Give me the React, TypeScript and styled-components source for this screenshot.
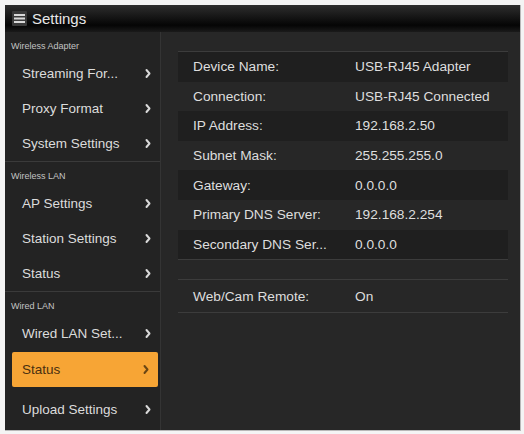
import React from "react";
import styled, { createGlobalStyle } from "styled-components";

const Global = createGlobalStyle`
  html, body { margin: 0; padding: 0; background: #ffffff; }
  body { font-family: "Liberation Sans", Arial, sans-serif; }
`;

const Frame = styled.div`
  width: 524px;
  height: 434px;
  box-sizing: border-box;
  padding: 5px 4px 4px 5px;
  background: #f4f4f4;
`;

const Window = styled.div`
  width: 515px;
  height: 425px;
  display: flex;
  flex-direction: column;
  background: #272727;
  border-right: 1px solid #b8b8b8;
  border-bottom: 1px solid #b8b8b8;
  overflow: hidden;
`;

const TitleBar = styled.div`
  height: 27px;
  flex: none;
  display: flex;
  align-items: center;
  gap: 5px;
  padding-left: 7px;
  background: linear-gradient(#2e2e2e 0%, #151515 45%, #050505 75%, #1a1a1a 100%);
  color: #e8e8e8;
  font-size: 15px;
`;

const Body = styled.div`
  flex: 1;
  display: flex;
  min-height: 0;
`;

const Sidebar = styled.nav`
  width: 155px;
  flex: none;
  background: #232323;
  border-right: 1px solid #343434;
  display: flex;
  flex-direction: column;
`;

const Group = styled.div<{ $last?: boolean }>`
  display: flex;
  flex-direction: column;
  border-bottom: ${(p) => (p.$last ? "none" : "1px solid #3a3a3a")};
`;

const GroupTitle = styled.div`
  height: 24px;
  box-sizing: border-box;
  display: flex;
  align-items: center;
  padding: 3px 0 0 6px;
  font-size: 9px;
  color: #c4c4c4;
`;

const Item = styled.div<{ $active?: boolean }>`
  height: 35px;
  display: flex;
  align-items: center;
  justify-content: space-between;
  margin: ${(p) => (p.$active ? "1px 2px 5px 7px" : "0")};
  padding: ${(p) => (p.$active ? "0 8px 0 10px" : "0 8px 0 17px")};
  background: ${(p) => (p.$active ? "#f7a535" : "transparent")};
  color: ${(p) => (p.$active ? "#4a3010" : "#dcdcdc")};
  border-radius: ${(p) => (p.$active ? "2px" : "0")};
  font-size: 13.5px;
`;

const Chevron = styled.svg<{ $active?: boolean }>`
  width: 8px;
  height: 11px;
  flex: none;
  stroke: ${(p) => (p.$active ? "#6a4614" : "#d8d8d8")};
`;

const Main = styled.section`
  flex: 1;
  padding: 19px 12px 0 17px;
  display: flex;
  flex-direction: column;
`;

const Table = styled.div`
  display: flex;
  flex-direction: column;
  border-top: 1px solid #3c3c3c;
  border-bottom: 1px solid #3c3c3c;
`;

const Row = styled.div<{ $shade?: boolean; $tall?: boolean }>`
  height: ${(p) => (p.$tall ? "32px" : "29.6px")};
  display: grid;
  grid-template-columns: 162px 1fr;
  align-items: center;
  padding-left: 15px;
  background: ${(p) => (p.$shade ? "#1f1f1f" : "transparent")};
  color: #dedede;
  font-size: 13.7px;
  white-space: nowrap;
`;

const Spacer = styled.div`
  height: 19px;
`;

const MenuIcon = () => (
  <svg width="15" height="15" viewBox="0 0 15 15">
    <rect x="0" y="0" width="15" height="15" rx="1" fill="#3a3a3a" />
    <rect x="2" y="3" width="11" height="2" fill="#d8d8d8" />
    <rect x="2" y="6.5" width="11" height="2" fill="#d8d8d8" />
    <rect x="2" y="10" width="11" height="2" fill="#d8d8d8" />
  </svg>
);

const Arrow = ({ active }: { active?: boolean }) => (
  <Chevron $active={active} viewBox="0 0 8 11" fill="none" strokeWidth="2" strokeLinecap="round" strokeLinejoin="round">
    <path d="M2.5 2 L5.5 5.5 L2.5 9" />
  </Chevron>
);

type NavItem = { label: string; active?: boolean };
const groups: { title: string; items: NavItem[] }[] = [
  { title: "Wireless Adapter", items: [{ label: "Streaming For..." }, { label: "Proxy Format" }, { label: "System Settings" }] },
  { title: "Wireless LAN", items: [{ label: "AP Settings" }, { label: "Station Settings" }, { label: "Status" }] },
  { title: "Wired LAN", items: [{ label: "Wired LAN Set..." }, { label: "Status", active: true }, { label: "Upload Settings" }] },
];

const status: [string, string][] = [
  ["Device Name:", "USB-RJ45 Adapter"],
  ["Connection:", "USB-RJ45 Connected"],
  ["IP Address:", "192.168.2.50"],
  ["Subnet Mask:", "255.255.255.0"],
  ["Gateway:", "0.0.0.0"],
  ["Primary DNS Server:", "192.168.2.254"],
  ["Secondary DNS Ser...", "0.0.0.0"],
];

export default function App() {
  return (
    <Frame>
      <Global />
      <Window>
        <TitleBar>
          <MenuIcon />
          <span>Settings</span>
        </TitleBar>
        <Body>
          <Sidebar>
            {groups.map((g, gi) => (
              <Group key={g.title} $last={gi === groups.length - 1}>
                <GroupTitle>{g.title}</GroupTitle>
                {g.items.map((it) => (
                  <Item key={it.label} $active={it.active}>
                    <span>{it.label}</span>
                    <Arrow active={it.active} />
                  </Item>
                ))}
              </Group>
            ))}
          </Sidebar>
          <Main>
            <Table>
              {status.map(([k, v], i) => (
                <Row key={k} $shade={i % 2 === 0}>
                  <span>{k}</span>
                  <span>{v}</span>
                </Row>
              ))}
            </Table>
            <Spacer />
            <Table>
              <Row $tall>
                <span>Web/Cam Remote:</span>
                <span>On</span>
              </Row>
            </Table>
          </Main>
        </Body>
      </Window>
    </Frame>
  );
}
